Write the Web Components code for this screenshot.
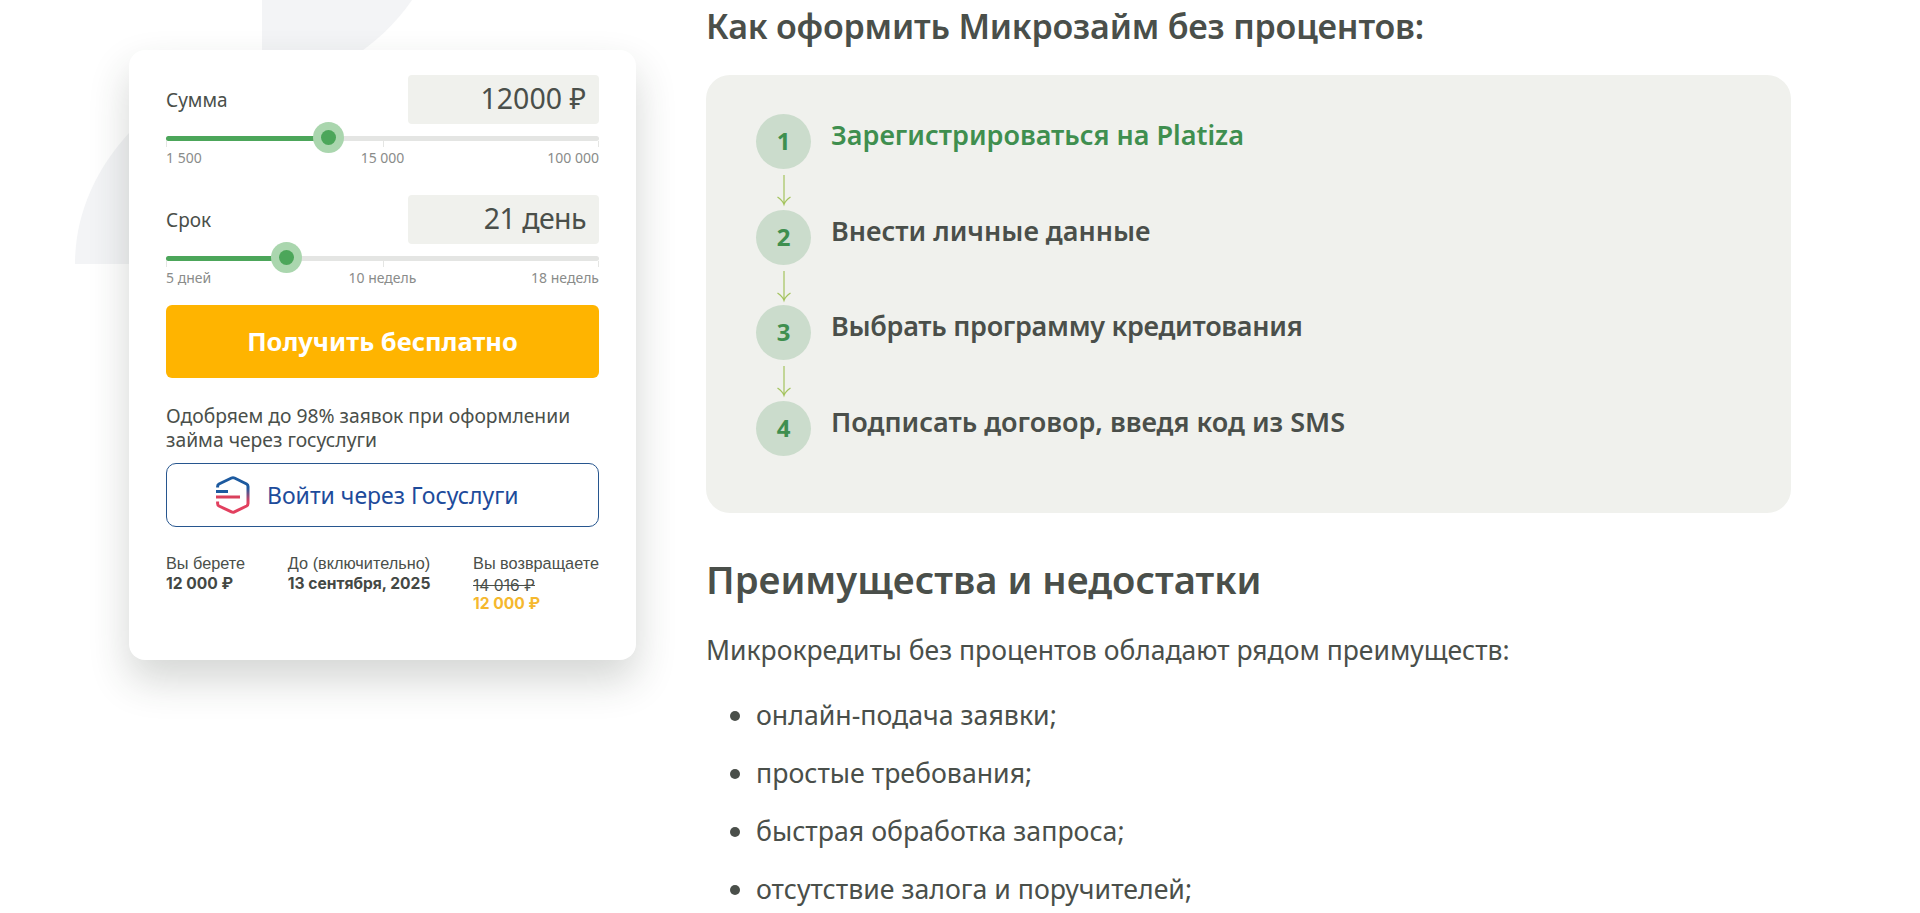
<!DOCTYPE html>
<html lang="ru">
<head>
<meta charset="utf-8">
<title>Микрозайм без процентов</title>
<style>
  html, body { margin: 0; height: 913px; overflow: hidden; background: #fff; }
  body { font-family: "Noto Sans", "Liberation Sans", sans-serif; color: #4a4f4a; }
</style>
</head>
<body>
<loan-page>
  <loan-card slot="left"></loan-card>
  <div slot="right">
    <section-title>Как оформить Микрозайм без процентов:</section-title>
    <steps-panel>
      <step-item num="1" active>Зарегистрироваться на Platiza</step-item>
      <step-item num="2">Внести личные данные</step-item>
      <step-item num="3" style="letter-spacing:-0.28px">Выбрать программу кредитования</step-item>
      <step-item num="4" last>Подписать договор, введя код из SMS</step-item>
    </steps-panel>
    <article-body>
      <span slot="title">Преимущества и недостатки</span>
      <span slot="intro">Микрокредиты без процентов обладают рядом преимуществ:</span>
      <li>онлайн-подача заявки;</li>
      <li>простые требования;</li>
      <li>быстрая обработка запроса;</li>
      <li>отсутствие залога и поручителей;</li>
    </article-body>
  </div>
</loan-page>

<script>
class LoanPage extends HTMLElement {
    constructor() {
        super();
        this.attachShadow({ mode: 'open' });
        this.shadowRoot.innerHTML = `
            <style>
                :host { display: block; position: relative; height: 913px; overflow: hidden; }
                .bg { position: absolute; left: 0; top: 0; }
                .cols { position: relative; display: flex; gap: 70px; padding-left: 129px; }
                .left { width: 507px; flex: none; padding-top: 50px; }
                .right { width: 1085px; flex: none; }
            </style>
            <svg class="bg" width="500" height="300" viewBox="0 0 500 300" fill="#f3f4f6">
                <path d="M262 0H412C395 25 375 42 352 58H262Z"/>
                <path d="M75 264C75 215 95 170 129 133L160 105V264Z"/>
            </svg>
            <div class="cols">
                <div class="left"><slot name="left"></slot></div>
                <div class="right"><slot name="right"></slot></div>
            </div>
        `;
    }
}

class RangeField extends HTMLElement {
    constructor() {
        super();
        this.attachShadow({ mode: 'open' });
        const [a, b, c] = this.getAttribute('marks').split('|');
        this.shadowRoot.innerHTML = `
            <style>
                :host { display: block; }
                .row { display: flex; justify-content: space-between; align-items: center; height: 49px; }
                .label { font-size: 19px; position: relative; }
                .value {
                    width: 191px; height: 49px; box-sizing: border-box; padding-right: 13px;
                    background: #f0f1ed; border-radius: 4px; text-align: right;
                    font-size: 28.5px; line-height: 47px; color: #4a4f4a;
                }
                .track { position: relative; height: 5px; margin-top: 12px; background: #e4e5e3; border-radius: 3px; }
                .fill { height: 100%; background: #4ca65a; border-radius: 3px; }
                .thumb {
                    position: absolute; top: -14px; width: 31px; height: 31px; margin-left: -15.5px;
                    border-radius: 50%; background: #aad6ae; display: grid; place-items: center;
                }
                .thumb::after { content: ""; width: 15px; height: 15px; border-radius: 50%; background: #4ca65a; }
                .tick { position: absolute; top: 5px; width: 1px; height: 6px; background: #e4e5e3; }
                .marks {
                    display: grid; grid-template-columns: 1fr auto 1fr; margin-top: 9px;
                    font-size: 14px; line-height: 16px; color: #8a8c8a;
                }
                .marks span:last-child { text-align: right; }
            </style>
            <div class="row">
                <span class="label"><slot></slot></span>
                <div class="value" style="letter-spacing:${this.getAttribute('spacing') || 0}px">${this.getAttribute('value')}</div>
            </div>
            <div class="track">
                <div class="fill" style="width:${this.getAttribute('pos')}%"></div>
                <i class="tick" style="left:0"></i>
                <i class="tick" style="left:50%"></i>
                <i class="tick" style="right:0"></i>
                <div class="thumb" style="left:${this.getAttribute('pos')}%"></div>
            </div>
            <div class="marks"><span>${a}</span><span>${b}</span><span>${c}</span></div>
        `;
    }
}

class LoanCard extends HTMLElement {
    constructor() {
        super();
        this.attachShadow({ mode: 'open' });
        this.shadowRoot.innerHTML = `
            <style>
                :host {
                    display: block; box-sizing: border-box; width: 507px; height: 610px;
                    padding: 25px 37px 0; background: #fff; border-radius: 16px;
                    box-shadow: 0 20px 40px rgba(40, 50, 40, 0.2);
                }
                range-field + range-field { margin-top: 29px; }
                .cta {
                    margin-top: 19px; height: 73px; background: #ffb400; border-radius: 6px;
                    display: flex; align-items: center; justify-content: center; padding-bottom: 2px; box-sizing: border-box;
                    color: #fff; font-size: 25.5px; font-weight: 700;
                }
                p { margin: 26px 0 0; font-size: 19.3px; line-height: 24px; }
                .gos {
                    margin-top: 11px; height: 64px; box-sizing: border-box;
                    border: 1px solid #27568f; border-radius: 10px;
                    display: flex; align-items: center; padding-left: 49px; gap: 17px;
                    color: #1d4b9b; font-size: 23px;
                }
                .gos svg { flex: none; }
                .info { display: flex; justify-content: space-between; margin-top: 26px; }
                .info b { display: block; font-family: Inter, sans-serif; font-weight: 700; font-size: 15.6px; line-height: 20px; color: #444844; margin-top: 1px; }
                .cap { font-family: "Liberation Sans", sans-serif; font-size: 16.3px; line-height: 20px; }
                .old { display: block; font-family: Inter, sans-serif; font-size: 15.6px; line-height: 18px; margin-top: 4px; text-decoration: line-through; }
                .info b.now { color: #f5b82e; margin-top: 0; line-height: 17px; }
            </style>
            <range-field value="12000 ₽" pos="37.6" marks="1 500|15 000|100 000">Сумма</range-field>
            <range-field value="21 день" pos="27.8" spacing="-0.55" marks="5 дней|10 недель|18 недель">Срок</range-field>
            <div class="cta">Получить бесплатно</div>
            <p>Одобряем до 98% заявок при оформлении займа через госуслуги</p>
            <div class="gos">
                <svg width="34" height="38" viewBox="0 0 34 38" fill="none">
                    <defs>
                        <linearGradient id="g" x1="0" y1="0" x2="0" y2="1">
                            <stop offset="0.3" stop-color="#1d5a9f"/>
                            <stop offset="0.7" stop-color="#e2405f"/>
                        </linearGradient>
                    </defs>
                    <path d="M1.6 11.5V10.5Q1.6 8.8 3 8L15.5 2Q17 1.3 18.5 2L30.6 8Q32 8.8 32 10.5V27.5Q32 29.2 30.6 30L18.5 35.8Q17 36.5 15.5 35.8L3 30Q1.6 29.2 1.6 27.5V25.5" stroke="url(#g)" stroke-width="3"/>
                    <rect x="0" y="14" width="12" height="3" fill="#1d5a9f"/>
                    <rect x="0" y="19.5" width="24" height="3" fill="#d9405c"/>
                </svg>
                <span>Войти через Госуслуги</span>
            </div>
            <div class="info">
                <div><div class="cap">Вы берете</div><b>12 000 ₽</b></div>
                <div><div class="cap">До (включительно)</div><b>13 сентября, 2025</b></div>
                <div><div class="cap">Вы возвращаете</div><span class="old">14 016 ₽</span><b class="now">12 000 ₽</b></div>
            </div>
        `;
    }
}

class SectionTitle extends HTMLElement {
    constructor() {
        super();
        this.attachShadow({ mode: 'open' });
        this.shadowRoot.innerHTML = `
            <style>
                :host { display: block; font-size: 34px; letter-spacing: -0.2px; font-weight: 600; line-height: 52px; color: #4a4f4a; }
            </style>
            <slot></slot>
        `;
    }
}

class StepsPanel extends HTMLElement {
    constructor() {
        super();
        this.attachShadow({ mode: 'open' });
        this.shadowRoot.innerHTML = `
            <style>
                :host {
                    display: block; box-sizing: border-box; height: 438px; margin-top: 23px;
                    padding: 39px 50px 0; background: #f0f1ed; border-radius: 24px;
                }
            </style>
            <slot></slot>
        `;
    }
}

class StepItem extends HTMLElement {
    constructor() {
        super();
        this.attachShadow({ mode: 'open' });
        const arrow = this.hasAttribute('last') ? '' : `
            <svg class="arrow" width="18" height="41" viewBox="0 0 18 41" fill="none" stroke="#a4c45e" stroke-width="1.2">
                <path d="M9 6V35M2.5 28C5.5 30 8 32.5 9 35.5C10 32.5 12.5 30 15.5 28"/>
            </svg>`;
        this.shadowRoot.innerHTML = `
            <style>
                :host { display: block; --c: #4a4f4a; }
                :host([active]) { --c: #3f8f4f; }
                .row { display: flex; gap: 20px; height: 55px; }
                .num {
                    flex: none; width: 55px; height: 55px; border-radius: 50%; background: #cbdccc;
                    display: grid; place-items: center; color: #3f8f4f; font-size: 24px; font-weight: 700;
                    padding-bottom: 2px; box-sizing: border-box;
                }
                .txt { font-size: 27px; font-weight: 600; line-height: 38px; padding-top: 2px; color: var(--c); }
                .arrow { display: block; margin-left: 19px; margin-bottom: -0.4px; }
            </style>
            <div class="row"><div class="num">${this.getAttribute('num')}</div><div class="txt"><slot></slot></div></div>
            ${arrow}
        `;
    }
}

class ArticleBody extends HTMLElement {
    constructor() {
        super();
        this.attachShadow({ mode: 'open' });
        this.shadowRoot.innerHTML = `
            <style>
                :host { display: block; margin-top: 39px; color: #4a4f4a; }
                h2 { margin: 0; font-size: 38.2px; font-weight: 600; line-height: 54px; }
                .intro { margin: 25px 0 0; font-size: 26.5px; line-height: 38px; }
                ul { margin: 27px 0 0; padding: 0 0 0 50px; display: grid; gap: 20px; font-size: 26.7px; line-height: 38px; }
            </style>
            <h2><slot name="title"></slot></h2>
            <p class="intro"><slot name="intro"></slot></p>
            <ul><slot></slot></ul>
        `;
    }
}

customElements.define('loan-page', LoanPage);
customElements.define('range-field', RangeField);
customElements.define('loan-card', LoanCard);
customElements.define('section-title', SectionTitle);
customElements.define('steps-panel', StepsPanel);
customElements.define('step-item', StepItem);
customElements.define('article-body', ArticleBody);
</script>
</body>
</html>
